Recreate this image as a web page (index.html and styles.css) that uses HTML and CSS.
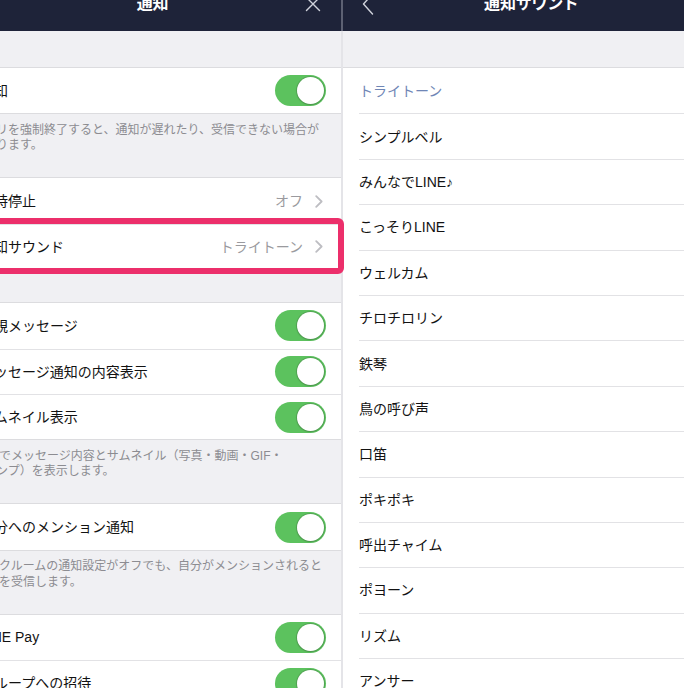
FILE: index.html
```html
<!DOCTYPE html>
<html lang="ja">
<head>
<meta charset="utf-8">
<title>通知</title>
<link rel="stylesheet" href="styles.css">
</head>
<body>
<div class="screen">
  <section class="panel panel-left">
    <header class="nav">
      <span class="nav-side"></span>
      <span class="nav-title">通知</span>
      <span class="nav-side nav-side-end">
        <svg class="nav-close" width="16" height="16" viewBox="0 0 16 16"><path d="M1.5 1.5 L14.5 14.5 M14.5 1.5 L1.5 14.5" /></svg>
      </span>
    </header>
    <div class="gap gap-top"></div>
    <div class="group">
      <div class="row"><span class="label">通知</span><span class="toggle"><span class="knob"></span></span></div>
    </div>
    <p class="note note-a">アプリを強制終了すると、通知が遅れたり、受信できない場合が<br>あります。</p>
    <div class="group">
      <div class="row"><span class="label">一時停止</span><span class="value">オフ</span><svg class="chev" width="8" height="13" viewBox="0 0 8 13"><path d="M1.2 1.2 L6.6 6.5 L1.2 11.8" /></svg></div>
      <div class="row row-highlight"><span class="label">通知サウンド</span><span class="value">トライトーン</span><svg class="chev" width="8" height="13" viewBox="0 0 8 13"><path d="M1.2 1.2 L6.6 6.5 L1.2 11.8" /></svg></div>
    </div>
    <div class="gap gap-mid"></div>
    <div class="group">
      <div class="row"><span class="label">新規メッセージ</span><span class="toggle"><span class="knob"></span></span></div>
      <div class="row"><span class="label">メッセージ通知の内容表示</span><span class="toggle"><span class="knob"></span></span></div>
      <div class="row"><span class="label">サムネイル表示</span><span class="toggle"><span class="knob"></span></span></div>
    </div>
    <p class="note note-b">通知でメッセージ内容とサムネイル（写真・動画・GIF・<br>スタンプ）を表示します。</p>
    <div class="group">
      <div class="row"><span class="label">自分へのメンション通知</span><span class="toggle"><span class="knob"></span></span></div>
    </div>
    <p class="note note-c">トークルームの通知設定がオフでも、自分がメンションされると<br>通知を受信します。</p>
    <div class="group">
      <div class="row"><span class="label">LINE Pay</span><span class="toggle"><span class="knob"></span></span></div>
      <div class="row"><span class="label">グループへの招待</span><span class="toggle"><span class="knob"></span></span></div>
    </div>
  </section>

  <div class="divider"></div>

  <section class="panel panel-right">
    <header class="nav">
      <span class="nav-side">
        <svg class="nav-back" width="12" height="22" viewBox="0 0 12 22"><path d="M10.5 1 L1.5 11 L10.5 21" /></svg>
      </span>
      <span class="nav-title">通知サウンド</span>
      <span class="nav-side"></span>
    </header>
    <div class="gap gap-top"></div>
    <ul class="list">
      <li class="item item-selected">トライトーン</li>
      <li class="item">シンプルベル</li>
      <li class="item">みんなでLINE♪</li>
      <li class="item">こっそりLINE</li>
      <li class="item">ウェルカム</li>
      <li class="item">チロチロリン</li>
      <li class="item">鉄琴</li>
      <li class="item">鳥の呼び声</li>
      <li class="item">口笛</li>
      <li class="item">ポキポキ</li>
      <li class="item">呼出チャイム</li>
      <li class="item">ポヨーン</li>
      <li class="item">リズム</li>
      <li class="item">アンサー</li>
    </ul>
  </section>
</div>
</body>
</html>
```

FILE: styles.css
```css
* { box-sizing: border-box; }

html, body {
  margin: 0;
  padding: 0;
  width: 684px;
  height: 688px;
  overflow: hidden;
  background: #f0f0f3;
  font-family: "Liberation Sans", "Noto Sans CJK JP", sans-serif;
  color: #121212;
}

.screen {
  display: flex;
  width: 684px;
  height: 688px;
  overflow: hidden;
}

.panel {
  flex: 0 0 377px;
  width: 377px;
  height: 688px;
  background: #f0f0f3;
}

.panel-left {
  margin-left: -36px;
}

.panel-right {
  overflow: hidden;
}

.divider {
  flex: 0 0 2px;
  background: linear-gradient(to bottom, #5d6173 0, #5d6173 31px, #e4e4e8 31px, #e4e4e8 100%);
}

/* navigation bar (cropped at the top) */
.nav {
  height: 31px;
  background: #1e2339;
  display: grid;
  grid-template-columns: 1fr auto 1fr;
  align-items: start;
  color: #fff;
}

.nav-title {
  font-size: 16px;
  line-height: 16px;
  font-weight: 700;
  margin-top: -4px;
  white-space: nowrap;
  letter-spacing: -0.2px;
}

.nav-side {
  display: flex;
}

.nav-side-end {
  justify-content: flex-end;
}

.nav-close {
  margin-top: -4px;
  margin-right: 20px;
}

.nav-close path,
.nav-back path {
  fill: none;
  stroke: #cfd2db;
  stroke-width: 1.4;
  stroke-linecap: round;
  stroke-linejoin: round;
}

.nav-back {
  margin-top: -7px;
  margin-left: 19px;
}

.gap-top { height: 36px; }
.gap-mid { height: 32px; }

/* settings groups */
.group {
  background: #fff;
  border-top: 1px solid #dcdcdf;
  border-bottom: 1px solid #dcdcdf;
}

.row {
  display: flex;
  align-items: center;
  height: 45.4px;
  padding: 0 15px 0 16px;
  background: #fff;
}

.row + .row {
  border-top: 1px solid #e2e2e5;
}

.label {
  flex: 1 1 auto;
  font-size: 14px;
  line-height: 18px;
  white-space: nowrap;
  color: #121212;
}

.value {
  font-size: 14px;
  line-height: 18px;
  color: #9a9a9e;
  white-space: nowrap;
  margin-right: 12px;
}

.chev {
  margin-right: 3px;
}

.chev path {
  fill: none;
  stroke: #bdbdc2;
  stroke-width: 1.8;
  stroke-linecap: round;
  stroke-linejoin: round;
}

/* iOS style switch */
.toggle {
  flex: 0 0 51px;
  width: 51px;
  height: 31px;
  border-radius: 16px;
  background: #5cc25e;
  display: flex;
  align-items: center;
  justify-content: flex-end;
  padding-right: 2px;
}

.knob {
  width: 27px;
  height: 27px;
  border-radius: 50%;
  background: #fff;
  box-shadow: 0 0 0 1px rgba(70, 120, 70, 0.35), 0 1px 2px rgba(0, 0, 0, 0.15);
}

/* highlight frame drawn over the sound row */
.row-highlight {
  position: relative;
}

.row-highlight::after {
  content: "";
  position: absolute;
  top: -7px;
  bottom: -5px;
  left: -10px;
  right: -3px;
  border: 6px solid #ec2f6b;
  border-radius: 6px;
  pointer-events: none;
}

/* footnotes */
.note {
  margin: 0;
  height: 63px;
  padding-top: 8.5px;
  font-size: 12px;
  line-height: 15.5px;
  color: #8c8c91;
  white-space: nowrap;
}

.note-a { padding-left: 20px; text-indent: -12px; }
.note-b { padding-left: 8px; text-indent: 3px; }
.note-c { padding-left: 11px; }

/* sound list */
.list {
  list-style: none;
  margin: 0;
  padding: 0;
  background: #fff;
  border-top: 1px solid #dcdcdf;
}

.item {
  margin-left: 16px;
  height: 45.4px;
  display: flex;
  align-items: center;
  font-size: 14px;
  line-height: 18px;
  color: #121212;
  white-space: nowrap;
}

.item + .item {
  border-top: 1px solid #e2e2e5;
}

.item-selected {
  color: #6f86b6;
}
```
